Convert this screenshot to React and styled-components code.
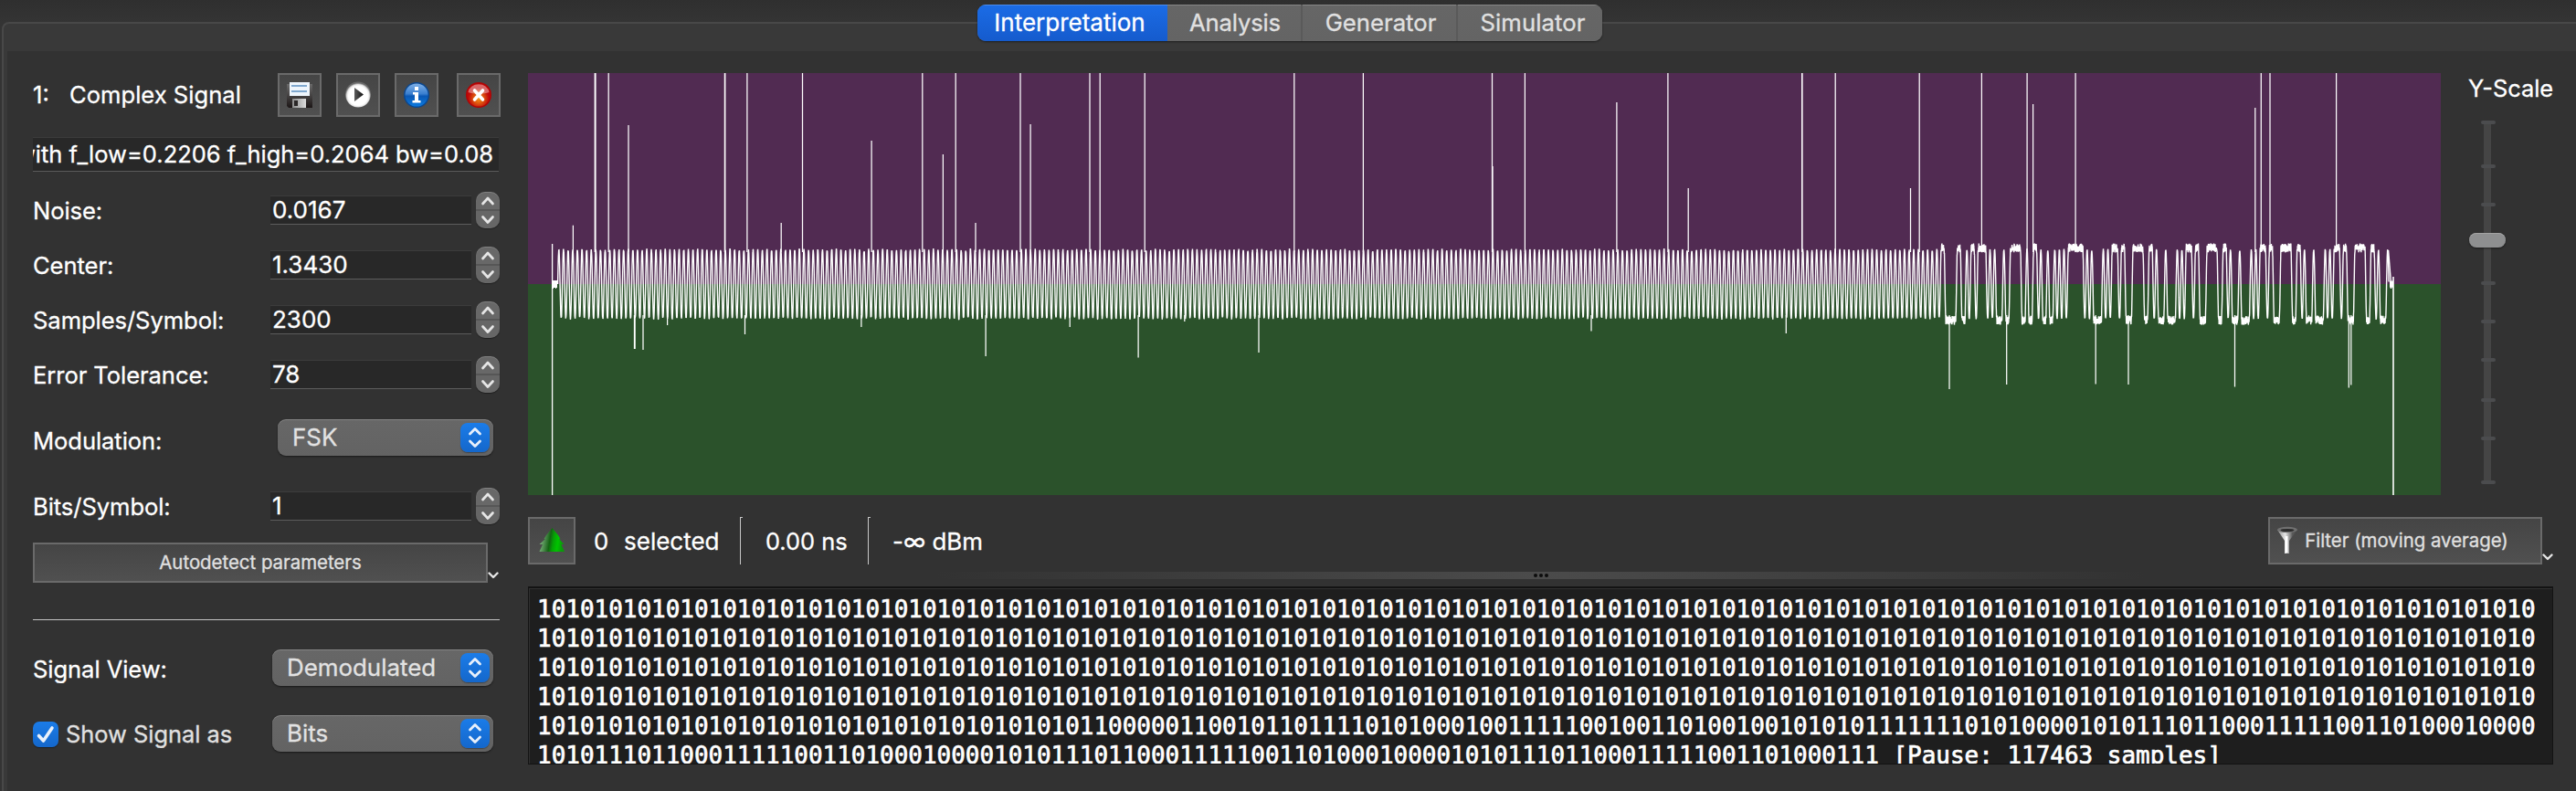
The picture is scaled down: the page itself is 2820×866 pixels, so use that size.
import React from "react";
import styled, { createGlobalStyle, css } from "styled-components";

const GlobalStyle = createGlobalStyle`
  html, body {
    margin: 0;
    background: #323232;
  }
  * { box-sizing: border-box; }
`;

/* ---------- data ---------- */

const PREAMBLE = "10".repeat(70);
const BIT_ROWS = [
  PREAMBLE,
  PREAMBLE,
  PREAMBLE,
  PREAMBLE,
  "10".repeat(19) +
    "1100000" +
    "110010110111101010001001111100100110100100101010" +
    "11111110101000010101110110001111100110100010000",
  "10101110110001111100110100010000".repeat(2) + "101011101100011111001101000111",
];
const BITS = BIT_ROWS.join("");

/* [x, y] tips of the noise spikes; 80 is the upper edge of the plot */
const SPIKES_UP = [
  [627.4, 246.7], [651.6, 80, 2], [666.2, 80], [688, 137], [793.6, 80, 1.7], [817.9, 80],
  [855.2, 244], [878.5, 80], [954.1, 154], [1009.8, 80], [1032.4, 169], [1046.2, 80],
  [1068, 244], [1117, 80], [1128.1, 136], [1193, 80], [1204.2, 80], [1253.2, 80],
  [1416.8, 80], [1492.4, 80], [1633.5, 80], [1634, 182], [1669.4, 80], [1769.9, 112],
  [1825.9, 80], [1848.2, 206], [1972.8, 80, 1.6], [2009.2, 80], [2091.5, 206], [2101.2, 80],
  [2169.4, 80], [2219.1, 80], [2225.6, 114], [2272.1, 80], [2468.8, 118], [2475.3, 80],
  [2485, 80], [2557.6, 80],
];
const SPIKES_DOWN = [
  [694.8, 382, 1.9], [704, 383], [730.6, 356], [815.5, 366], [942.9, 358], [1079.1, 390],
  [1171.2, 358], [1246.1, 391.5], [1296.8, 352], [1378, 386], [1742, 362.5], [1955.3, 365],
  [2134, 426], [2196.7, 421], [2294.2, 420.5], [2330, 421], [2446.5, 423.5], [2571.3, 424.5],
  [2573.8, 421.5],
];

/* ---------- waveform ---------- */

const BIT_WIDTH = 2.531;
const FIRST_BIT_X = 2135.5 - 602.5 * BIT_WIDTH;
const MIDDLE = 311;

function noiseSource(seed) {
  let s = seed;
  return () => {
    s = (s * 1664525 + 1013904223) >>> 0;
    return s / 4294967296;
  };
}

function buildWave() {
  const random = noiseSource(7);
  const count = BITS.length - 2;
  const levelAt = (i) => (BITS[i] === "1" ? 1 : -1);
  const points = [];
  const step = 0.07;
  for (let t = 0; t < count; t += step) {
    const i = Math.floor(t);
    const f = t - i;
    const here = levelAt(i);
    const before = i > 0 ? levelAt(i - 1) : -here;
    const after = i < count - 1 ? levelAt(i + 1) : -here;
    const other = f < 0.5 ? before : after;
    const edge = f < 0.5 ? f : 1 - f;
    const flat = here === other;
    const inRun = before === here || after === here;
    const steepness = inRun ? 1.25 : 1.06;
    const shape = flat ? 1 : Math.sin(Math.PI * Math.min(0.5, edge * steepness));
    const reach = inRun ? 39.6 : 36.6 + (((i * 37) % 11) / 11) * 1.2;
    const wobble = inRun
      ? (random() - 0.5) * 10 * shape * shape
      : (random() - 0.5) * 2.6 * Math.pow(shape, 3);
    points.push(
      (FIRST_BIT_X + t * BIT_WIDTH).toFixed(2) +
        "," +
        (MIDDLE - here * shape * reach + wobble).toFixed(2)
    );
  }
  return points.join(" ");
}
const WAVE = buildWave();

function Waveform() {
  return (
    <PlotSvg viewBox="578 80 2094 462" aria-label="Demodulated signal">
      <rect x="578" y="80" width="2094" height="231" fill="#512b52" />
      <rect x="578" y="311" width="2094" height="231" fill="#2b522b" />
      <g stroke="#fff" fill="none">
        <polyline points={WAVE} strokeWidth="1.400" strokeLinejoin="bevel" />
        {SPIKES_UP.map(([x, y, w]) => (
          <line key={x} x1={x} x2={x} y1={y} y2="276" strokeWidth={w || 1.25} />
        ))}
        {SPIKES_DOWN.map(([x, y, w]) => (
          <line key={x} x1={x} x2={x} y1="345" y2={y} strokeWidth={w || 1.25} />
        ))}
        <line x1="604.6" x2="604.6" y1="267" y2="542" strokeWidth="1.3" />
        <line x1="2620" x2="2620" y1="303" y2="542" strokeWidth="1.6" />
        <path d="M2614.6 274 L2617.4 309" strokeWidth="1.4" />
      </g>
      <path d="M604 307h6v8h-1v1h-1v-1h-2v1h-2zM2616 307.500h4v7.500h-1v-1l-1 2h-1l-1-2z" fill="#fff" />
    </PlotSvg>
  );
}

/* ---------- shell ---------- */

const Window = styled.div`
  width: 2820px;
  height: 866px;
  overflow: hidden;
  display: flex;
  flex-direction: column;
  background: linear-gradient(#2f2f2f, #343434 24px);
  color: #fff;
  font-family: Inter, "Liberation Sans", sans-serif;
  font-size: 25.6px;
  line-height: 34px;
  white-space: pre;
  -webkit-text-stroke: 0.3px currentColor;
`;

const TabStrip = styled.div`
  height: 24px;
  flex: none;
  display: flex;
  justify-content: center;
  align-items: flex-start;
  padding: 5px 0 0 4px;
  position: relative;
  z-index: 1;
`;

const TabGroup = styled.div`
  display: flex;
  height: 40px;
  border-radius: 9px;
  overflow: hidden;
  flex: none;
  background: #656565;
  box-shadow: 0 1px 2px rgba(0, 0, 0, 0.5);
`;

const Tab = styled.div`
  width: ${(p) => p.$width}px;
  padding-left: ${(p) => p.$shift || 0}px;
  padding-right: ${(p) => p.$back || 0}px;
  display: flex;
  align-items: center;
  justify-content: center;
  font-size: ${(p) => (p.$active ? 26 : 25.7)}px;
  letter-spacing: ${(p) => p.$track || 0}px;
  color: ${(p) => (p.$active ? "#fff" : "#e0e0e0")};
  background: ${(p) => (p.$active ? "linear-gradient(#1b6ce6, #155bcd)" : "linear-gradient(#666, #646464)")};
  box-shadow: inset 0 2px 0 -1px rgba(255, 255, 255, 0.22);
  ${(p) => p.$divided && css`border-left: 2px solid #5a5a5a;`}
`;

const Frame = styled.div`
  flex: 1;
  display: flex;
  margin-left: 2px;
  padding: 30px 0 0 4px;
  border: solid #484848;
  border-width: 2px 0 0 2px;
  border-top-left-radius: 8px;
  background: #393939;
`;

const Pane = styled.div`
  flex: 1;
  display: flex;
  padding: 24px 25px 0 28px;
  background: #323232;
`;

/* ---------- left panel ---------- */

const Parameters = styled.div`
  width: 542px;
  flex: none;
  padding-right: 31px;
`;

const HeaderRow = styled.div`
  display: flex;
  align-items: center;
  height: 48px;
  margin-right: -1px;
`;
const SignalIndex = styled.span`
  width: 40px;
`;
const SignalKind = styled.span`
  flex: 1;
`;

const raised = css`
  border: 2px solid #6a6a6a;
  background: linear-gradient(#454545, #505050);
`;

const IconButton = styled.div`
  ${raised}
  width: ${(p) => p.$width || 48}px;
  height: ${(p) => p.$height || 48}px;
  margin-left: ${(p) => p.$gap || 0}px;
  display: flex;
  align-items: center;
  justify-content: center;
  flex: none;
`;

const field = css`
  background: #282828;
  border-top: 1px solid #3c3c3c;
  border-bottom: 1px solid #5c5c5c;
`;

const NameField = styled.div`
  ${field}
  height: 38px;
  margin: 22px 1px 0 0;
  padding-right: 6px;
  display: flex;
  justify-content: flex-end;
  align-items: center;
  overflow: hidden;
  font-size: 25.5px;
`;

const Row = styled.div`
  display: flex;
  align-items: center;
  justify-content: space-between;
  height: 40px;
  margin-top: ${(p) => p.$top}px;
  padding-right: ${(p) => p.$right || 0}px;
`;
const RowLabel = styled.span`
  flex: 1;
  padding-top: ${(p) => p.$drop || 2}px;
  letter-spacing: -0.08px;
`;

const SpinField = styled.div`
  ${field}
  width: 220px;
  height: 32px;
  margin-right: 5px;
  padding-left: 2px;
  font-size: 26px;
  line-height: 29px;
`;

const Stepper = styled.div`
  width: 26px;
  height: 40px;
  border-radius: 10px;
  background: linear-gradient(#686868 19px, #565656 19px, #565656 21px, #666 21px);
  box-shadow: 0 1px 1px rgba(0, 0, 0, 0.4), inset 0 1px 0 rgba(255, 255, 255, 0.16);
`;

const ComboBox = styled.div`
  width: ${(p) => p.$width}px;
  height: 40px;
  display: flex;
  align-items: center;
  justify-content: space-between;
  padding: 1px 4px 1px 16px;
  border-radius: 9px;
  color: #e2e2e2;
  font-size: 25.9px;
  background: linear-gradient(#676767, #636363);
  box-shadow: 0 1px 2px rgba(0, 0, 0, 0.5), inset 0 1px 0 rgba(255, 255, 255, 0.2);
`;
const ComboArrows = styled.div`
  width: 32px;
  height: 32px;
  margin-top: -1px;
  border-radius: 8px;
  background: linear-gradient(#1b7ce8, #1467cb);
  box-shadow: 0 1px 1px rgba(0, 0, 0, 0.3);
`;

const SplitButton = styled.div`
  display: flex;
  align-items: flex-end;
  margin-top: ${(p) => p.$top || 0}px;
`;
const ButtonFace = styled.div`
  ${raised}
  width: ${(p) => p.$width}px;
  height: ${(p) => p.$height}px;
  display: flex;
  align-items: center;
  justify-content: ${(p) => (p.$start ? "flex-start" : "center")};
  padding-left: ${(p) => p.$inset || 0}px;
  color: #e0e0e0;
  font-size: 20.4px;
  flex: none;
`;

const Divider = styled.div`
  height: 1px;
  margin-top: 40px;
  background: #c4c4c4;
`;

const CheckBox = styled.div`
  width: 28px;
  height: 28px;
  margin: 2px 8px 0 0;
  border-radius: 7px;
  background: linear-gradient(#1b7ce8, #1467cb);
  box-shadow: 0 1px 1px rgba(0, 0, 0, 0.4);
`;
const CheckLabel = styled.span`
  flex: 1;
  padding-top: 2px;
  color: #e0e0e0;
  font-size: 25.4px;
`;

/* ---------- signal area ---------- */

const SignalArea = styled.div`
  flex: 1;
  display: flex;
  flex-direction: column;
  min-width: 0;
`;
const PlotRow = styled.div`
  display: flex;
  height: 462px;
`;
const PlotSvg = styled.svg`
  width: 2094px;
  height: 462px;
  flex: none;
  display: block;
`;

const ScaleColumn = styled.div`
  flex: 1;
  display: flex;
  flex-direction: column;
  align-items: flex-start;
  padding-left: 30px;
  font-size: 25.4px;
`;
const SliderTrack = styled.div`
  position: relative;
  width: 8px;
  height: 398px;
  margin: 18px 0 0 17px;
  border-radius: 3px;
  background: #454545;
`;
const Tick = styled.div`
  position: absolute;
  left: -3px;
  width: 16px;
  height: 4px;
  border-radius: 2px;
  background: #4b4c4e;
`;
const Handle = styled.div`
  position: absolute;
  left: -16px;
  top: 123px;
  width: 40px;
  height: 16px;
  border-radius: 8px;
  background: #8e8f90;
  box-shadow: 0 1px 2px rgba(0, 0, 0, 0.5), inset 0 1px 0 #a3a3a3;
`;

const StatusRow = styled.div`
  display: flex;
  align-items: center;
  height: 52px;
  margin-top: 24px;
`;
const StatusText = styled.span`
  width: ${(p) => p.$width}px;
  margin-left: ${(p) => p.$left}px;
  padding-top: 1px;
  font-size: ${(p) => p.$size || 25.7}px;
`;
const StatusRule = styled.div`
  width: 3px;
  height: 52px;
  border-left: 1px solid #c8c8c8;
  border-top: 1px solid #c8c8c8;
`;
const Spacer = styled.div`
  flex: 1;
`;

const Splitter = styled.div`
  height: 8px;
  margin: 8px 0;
  display: flex;
  gap: 2px;
  align-items: center;
  justify-content: center;
  background: linear-gradient(90deg, #323232 446px, #4b4b4b 1108px, #323232 1770px);
`;
const Dot = styled.span`
  width: 4px;
  height: 4px;
  border-radius: 2px;
  background: #0c0c0c;
`;

const BitView = styled.div`
  height: 195px;
  overflow: hidden;
  padding: 7px 0 0 9px;
  border: 1px solid #131313;
  border-top-width: 2px;
  background: #1e1e1e;
  box-shadow: inset 1px 1px 0 #303030;
  font-family: "DejaVu Sans Mono", "Liberation Mono", monospace;
  font-size: 25.96px;
  line-height: 32px;
  -webkit-text-stroke: 0.7px #fff;
`;
const BitLine = styled.div`
  height: 32px;
`;

/* ---------- icons ---------- */

const Glyph = styled.svg`
  display: block;
  flex: none;
  margin: ${(p) => p.$margin || 0};
`;

const StepperArrows = () => (
  <Glyph width="26" height="40" fill="none" stroke="#e6e6e6" strokeWidth="2.7" strokeLinecap="round" strokeLinejoin="round">
    <path d="M7.500 13 L13 7 L18.500 13 M7.500 27.500 L13 33.500 L18.500 27.500" />
  </Glyph>
);

const ComboChevrons = () => (
  <Glyph width="32" height="32" fill="none" stroke="#e8f0fb" strokeWidth="2.8" strokeLinecap="round" strokeLinejoin="round">
    <path d="M10.500 12 L16 6.500 L21.500 12 M10.500 20 L16 25.500 L21.500 20" />
  </Glyph>
);

const MenuChevron = () => (
  <Glyph width="12" height="8" $margin="0 0 4px 0" fill="none" stroke="#e4e4e4" strokeWidth="2.4" strokeLinecap="round" strokeLinejoin="round">
    <path d="M1.500 1.500 L6 6 L10.500 1.500" />
  </Glyph>
);

const CheckMark = () => (
  <Glyph width="28" height="28" fill="none" stroke="#e9f1fb" strokeWidth="3.6" strokeLinecap="round" strokeLinejoin="round">
    <path d="M6.500 15.500 L11.500 21 L21 7" />
  </Glyph>
);

const SaveIcon = () => (
  <Glyph width="32" height="32">
    <defs>
      <linearGradient id="floppy" x1="0" y1="0" x2="0" y2="1">
        <stop offset="0" stopColor="#6a6a6a" />
        <stop offset="1" stopColor="#1c1616" />
      </linearGradient>
      <linearGradient id="shutter" x1="0" y1="0" x2="1" y2="0">
        <stop offset="0" stopColor="#8c8c8c" />
        <stop offset="1" stopColor="#dcdcdc" />
      </linearGradient>
    </defs>
    <path d="M2 4h28v26H4l-2-2z" fill="url(#floppy)" />
    <path d="M5 2h22v15H5z" fill="#eef5fc" />
    <path d="M7 6h17M7 12h17" stroke="#7fa8cf" strokeWidth="2" />
    <path d="M8 20h15v10H8z" fill="url(#shutter)" />
    <path d="M10 22h4v6h-4z" fill="#2a2727" />
  </Glyph>
);

const PlayIcon = () => (
  <Glyph width="32" height="32">
    <defs>
      <radialGradient id="play" cx="0.5" cy="0.55" r="0.5">
        <stop offset="0.75" stopColor="#fff" />
        <stop offset="0.88" stopColor="#e4e4e4" />
        <stop offset="1" stopColor="#6a6a6a" />
      </radialGradient>
      <linearGradient id="playMark" x1="0" y1="0" x2="1" y2="0">
        <stop offset="0" stopColor="#5c5c5c" />
        <stop offset="1" stopColor="#111" />
      </linearGradient>
    </defs>
    <circle cx="16" cy="15.500" r="14" fill="url(#play)" />
    <path d="M12 8 L22 15.500 L12 23z" fill="url(#playMark)" />
  </Glyph>
);

const InfoIcon = () => (
  <Glyph width="32" height="32">
    <defs>
      <linearGradient id="info" x1="0" y1="0" x2="0" y2="1">
        <stop offset="0" stopColor="#7fb0e6" />
        <stop offset="0.45" stopColor="#3a7fd0" />
        <stop offset="0.55" stopColor="#0b58b4" />
        <stop offset="1" stopColor="#0a7ae0" />
      </linearGradient>
    </defs>
    <circle cx="16" cy="16" r="14" fill="#0b478f" />
    <circle cx="16" cy="16" r="12.600" fill="url(#info)" />
    <path d="M14 7h4v4h-4zM12 13h6v9h2.500v2.500h-9V22H14v-6.500h-2z" fill="#fff" />
  </Glyph>
);

const CloseIcon = () => (
  <Glyph width="32" height="32">
    <defs>
      <radialGradient id="close" cx="0.5" cy="0.65" r="0.5">
        <stop offset="0" stopColor="#f59a1a" />
        <stop offset="0.45" stopColor="#dd5510" />
        <stop offset="0.9" stopColor="#c00808" />
      </radialGradient>
    </defs>
    <circle cx="16" cy="16" r="14" fill="#b00404" />
    <circle cx="16" cy="16" r="12.600" fill="url(#close)" />
    <path d="M4.500 13a11.600 10 0 0 1 23 0c-6 2-17 2-23 0z" fill="#fff" opacity="0.4" />
    <path d="M11.500 11l9 10M20.500 11l-9 10" stroke="#fff" strokeWidth="3.600" strokeLinecap="round" />
  </Glyph>
);

const TreeIcon = () => (
  <Glyph width="28" height="30">
    <defs>
      <linearGradient id="tree" x1="0" y1="0" x2="1" y2="0.15">
        <stop offset="0.05" stopColor="#8cbf8d" />
        <stop offset="0.3" stopColor="#4a8a4b" />
        <stop offset="0.48" stopColor="#136313" />
        <stop offset="0.62" stopColor="#06a006" />
        <stop offset="0.8" stopColor="#00c400" />
        <stop offset="1" stopColor="#0a9a0a" />
      </linearGradient>
    </defs>
    <path d="M14.500 1 L21 9 L23.500 13H22L27.500 19H24.500L28 27H0.500L4 19H0.500L7 13H5.500L8 9z" fill="url(#tree)" />
  </Glyph>
);

const FunnelIcon = () => (
  <Glyph width="24" height="34" $margin="0 7px 0 0">
    <defs>
      <linearGradient id="funnel" x1="0" y1="0" x2="1" y2="0">
        <stop offset="0" stopColor="#8a8a8a" />
        <stop offset="0.4" stopColor="#e8e8e8" />
        <stop offset="0.75" stopColor="#5a5a5a" />
        <stop offset="1" stopColor="#4a4a4a" />
      </linearGradient>
    </defs>
    <path d="M1 5 L9 17V31h5V17L23 5z" fill="url(#funnel)" />
    <ellipse cx="12" cy="5" rx="11" ry="3.200" fill="#707070" />
    <ellipse cx="12" cy="5.500" rx="7.500" ry="1.600" fill="#2b2b2b" />
    <path d="M11.200 12V30" stroke="#fff" strokeWidth="2.600" />
  </Glyph>
);

/* ---------- composed controls ---------- */

function SpinRow({ label, value, top }) {
  return (
    <Row $top={top}>
      <RowLabel>{label}</RowLabel>
      <SpinField>{value}</SpinField>
      <Stepper>
        <StepperArrows />
      </Stepper>
    </Row>
  );
}

function Combo({ width, children }) {
  return (
    <ComboBox $width={width}>
      <span>{children}</span>
      <ComboArrows>
        <ComboChevrons />
      </ComboArrows>
    </ComboBox>
  );
}

const TICKS = [0, 48, 90, 176, 218, 260, 304, 346, 394];

export default function App() {
  return (
    <Window>
      <GlobalStyle />
      <TabStrip>
        <TabGroup>
          <Tab $active $width={208} $back={6}>Interpretation</Tab>
          <Tab $width={146} $shift={2} $track={-0.2}>Analysis</Tab>
          <Tab $width={170} $shift={3} $divided>Generator</Tab>
          <Tab $width={160} $shift={6} $track={0.1} $divided>Simulator</Tab>
        </TabGroup>
      </TabStrip>
      <Frame>
        <Pane>
          <Parameters>
            <HeaderRow>
              <SignalIndex>1:</SignalIndex>
              <SignalKind>Complex Signal</SignalKind>
              <IconButton><SaveIcon /></IconButton>
              <IconButton $gap={16}><PlayIcon /></IconButton>
              <IconButton $gap={16}><InfoIcon /></IconButton>
              <IconButton $gap={20}><CloseIcon /></IconButton>
            </HeaderRow>
            <NameField>with f_low=0.2206 f_high=0.2064 bw=0.08</NameField>
            <SpinRow label="Noise:" value="0.0167" top={22} />
            <SpinRow label="Center:" value="1.3430" top={20} />
            <SpinRow label="Samples/Symbol:" value="2300" top={20} />
            <SpinRow label="Error Tolerance:" value="78" top={20} />
            <Row $top={29} $right={7}>
              <RowLabel $drop={7}>Modulation:</RowLabel>
              <Combo width={236}>FSK</Combo>
            </Row>
            <SpinRow label="Bits/Symbol:" value="1" top={35} />
            <SplitButton $top={20}>
              <ButtonFace $width={498} $height={44}>Autodetect parameters</ButtonFace>
              <MenuChevron />
            </SplitButton>
            <Divider />
            <Row $top={32} $right={7}>
              <RowLabel $drop={4}>Signal View:</RowLabel>
              <Combo width={242}>Demodulated</Combo>
            </Row>
            <Row $top={32} $right={7}>
              <CheckBox><CheckMark /></CheckBox>
              <CheckLabel>Show Signal as</CheckLabel>
              <Combo width={242}>Bits</Combo>
            </Row>
          </Parameters>
          <SignalArea>
            <PlotRow>
              <Waveform />
              <ScaleColumn>
                Y-Scale
                <SliderTrack>
                  {TICKS.map((y) => (
                    <Tick key={y} style={{ top: y }} />
                  ))}
                  <Handle />
                </SliderTrack>
              </ScaleColumn>
            </PlotRow>
            <StatusRow>
              <IconButton $width={52} $height={52}><TreeIcon /></IconButton>
              <StatusText $left={20} $width={33}>0</StatusText>
              <StatusText $left={0} $width={127} $size={26}>selected</StatusText>
              <StatusRule />
              <StatusText $left={25} $width={112} $size={25.4}>0.00 ns</StatusText>
              <StatusRule />
              <StatusText $left={24} $width={110} $size={25.9}>-∞ dBm</StatusText>
              <Spacer />
              <SplitButton>
                <ButtonFace $width={300} $height={52} $start $inset={7}>
                  <FunnelIcon />
                  Filter (moving average)
                </ButtonFace>
                <MenuChevron />
              </SplitButton>
            </StatusRow>
            <Splitter>
              <Dot />
              <Dot />
              <Dot />
            </Splitter>
            <BitView>
              {BIT_ROWS.map((row, i) => (
                <BitLine key={i}>{i === 5 ? row + " [Pause: 117463 samples]" : row}</BitLine>
              ))}
            </BitView>
          </SignalArea>
        </Pane>
      </Frame>
    </Window>
  );
}
